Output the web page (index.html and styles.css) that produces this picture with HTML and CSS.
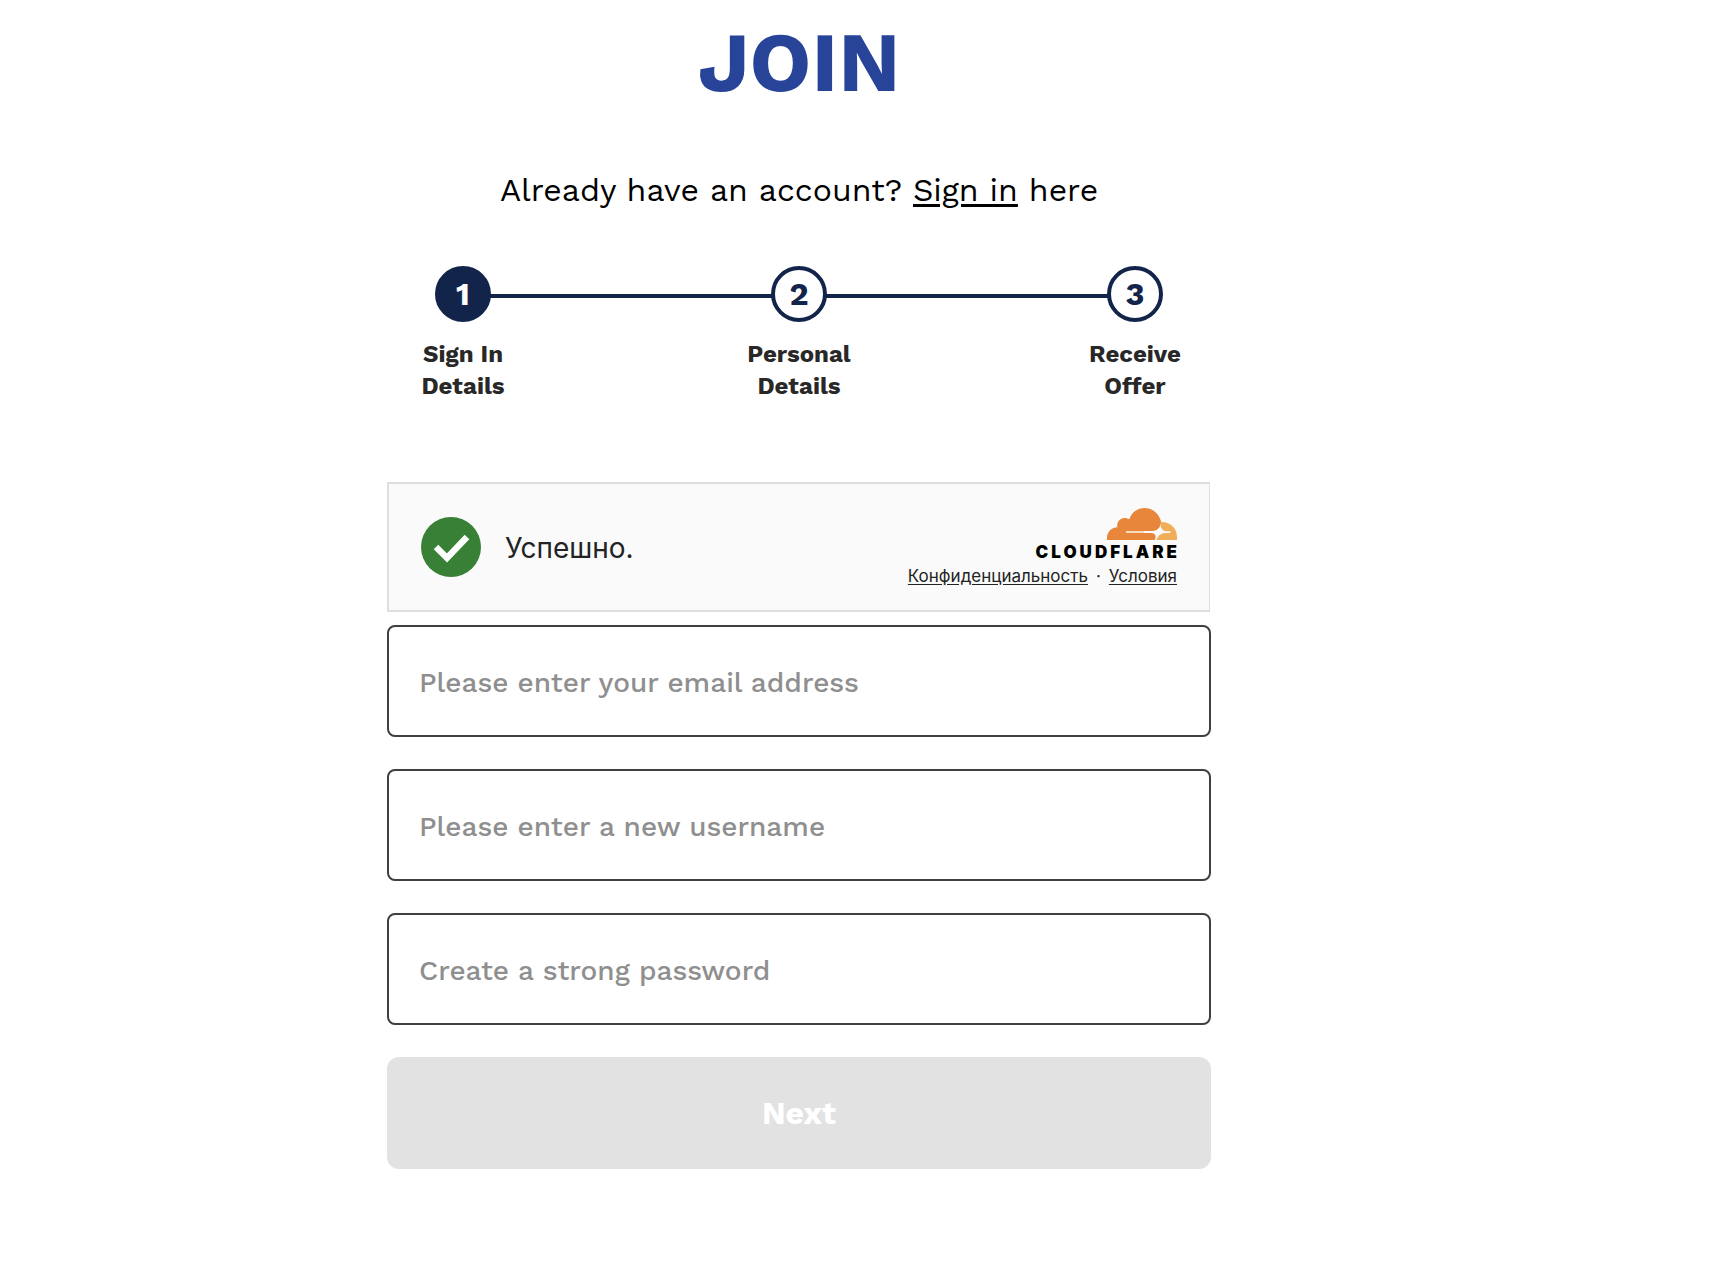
FILE: index.html
```html
<!DOCTYPE html>
<html lang="en">
<head>
	<meta charset="UTF-8">
	<meta name="viewport" content="width=device-width, initial-scale=1">
	<title>Join</title>
	<link rel="stylesheet" href="styles.css">
</head>
<body>
	<main class="join">
		<h1 class="title">JOIN</h1>
		<p class="signin">Already have an account? <a href="#">Sign in</a> here</p>

		<ol class="steps">
			<li class="step active">
				<span class="num">1</span>
				<span class="name">Sign In Details</span>
			</li>
			<li class="step">
				<span class="num">2</span>
				<span class="name">Personal Details</span>
			</li>
			<li class="step">
				<span class="num">3</span>
				<span class="name">Receive Offer</span>
			</li>
		</ol>

		<form class="form">
			<div class="captcha" lang="ru">
				<svg class="check" viewBox="0 0 60 60" aria-hidden="true">
					<circle cx="30" cy="30" r="30" fill="#388036"/>
					<path d="M15 30 L26 41 L46 20" fill="none" stroke="#fff" stroke-width="6.4"/>
				</svg>
				<span class="status">Успешно.</span>
				<div class="brand">
					<svg class="cloud" viewBox="0 0 210 96" aria-hidden="true">
						<path fill="#e8873c" d="M0 96V88C2 70 14 59 31 58C28 42 40 30 52 30C58 30 63 32 67 34C74 12 92 0 112 0C138 0 157 18 162 40C162 56 153 68 139 69H57V75H134C144 76 148 83 145 91L143 96Z"/>
						<path fill="#f1ae59" d="M163 42C190 41 210 62 210 86V96H148C152 85 160 77 173 75H190V70H175C164 67 158 54 163 42Z"/>
						<path fill="#f7d9bb" d="M57 69H110V75H57Z"/>
					</svg>
					<span class="wordmark">CLOUDFLARE</span>
					<div class="terms">
						<a href="#">Конфиденциальность</a>
						<span>·</span>
						<a href="#">Условия</a>
					</div>
				</div>
			</div>

			<input class="field" type="email" aria-label="Email address" placeholder="Please enter your email address">
			<input class="field" type="text" aria-label="Username" placeholder="Please enter a new username">
			<input class="field" type="password" aria-label="Password" placeholder="Create a strong password">

			<button class="next" type="submit" disabled>Next</button>
		</form>
	</main>
</body>
</html>
```
FILE: styles.css
```css
*{
	box-sizing: border-box;
}
body{
	margin: 0;
	padding-right: 130px;
	background: #fff;
	color: #000;
	font-family: "Work Sans", Inter, "Liberation Sans", sans-serif;
}
.join{
	width: 100%;
	max-width: 824px;
	margin: 0 auto;
	padding: 15px 0 64px;
}
.title{
	margin: 0;
	color: #284498;
	font-size: 84px;
	font-weight: 700;
	line-height: 94px;
	text-align: center;
}
.signin{
	margin: 61px 0 56px;
	font-size: 32px;
	line-height: 40px;
	text-align: center;
}
.signin a{
	color: inherit;
	text-decoration-thickness: 3px;
	text-underline-offset: 3px;
}

/* progress steps */
.steps{
	display: flex;
	justify-content: space-between;
	margin: 0;
	padding: 0 20px;
	list-style: none;
	/* connecting line, behind the circles */
	background: linear-gradient(#13244b, #13244b) no-repeat center 28px / calc(100% - 152px) 4px;
}
.step{
	display: flex;
	flex-direction: column;
	align-items: center;
	width: 112px;
}
.num{
	display: flex;
	align-items: center;
	justify-content: center;
	width: 56px;
	height: 56px;
	border: 4px solid #13244b;
	border-radius: 50%;
	background: #fff;
	color: #13244b;
	font-size: 32px;
	font-weight: 700;
}
.active .num{
	background: #13244b;
	color: #fff;
}
.name{
	margin-top: 16px;
	color: #282828;
	font-size: 24px;
	font-weight: 700;
	line-height: 32px;
	text-align: center;
}

.form{
	display: flex;
	flex-direction: column;
	margin-top: 80px;
}

/* captcha widget */
.captcha{
	display: flex;
	align-items: center;
	min-height: 130px;
	margin: 0 1px 13px 0;
	padding: 0 32px;
	border: 2px solid #dedede;
	border-right-width: 1px;
	background: #fafafa;
	color: #232323;
	font-family: Inter, "Liberation Sans", sans-serif;
}
.check{
	width: 60px;
	height: 60px;
}
.status{
	margin-left: 24px;
	padding-top: 2px;
	font-size: 28px;
}
.brand{
	display: flex;
	flex-direction: column;
	align-items: flex-end;
	margin-left: auto;
	padding-top: 2px;
}
.cloud{
	width: 70px;
	height: 32px;
}
.wordmark{
	/* drop the tracking after the last letter */
	margin-right: -3px;
	color: #000;
	font-size: 17px;
	font-weight: 900;
	letter-spacing: 3px;
	line-height: 24px;
}
.terms{
	display: flex;
	gap: 8px;
	font-size: 17px;
	line-height: 24px;
}
.terms a{
	color: inherit;
	text-underline-offset: 2px;
}

.field{
	width: 100%;
	height: 112px;
	margin: 0 0 32px;
	padding: 2px 30px 0;
	border: 2px solid #3f3f44;
	border-radius: 8px;
	background: #fff;
	font-family: inherit;
	font-size: 28px;
	font-weight: 500;
}
.field::placeholder{
	color: #8f8f8f;
}
.next{
	height: 112px;
	border: 0;
	border-radius: 12px;
	background: #e2e2e2;
	color: #fff;
	font-family: inherit;
	font-size: 32px;
	font-weight: 700;
}
```
